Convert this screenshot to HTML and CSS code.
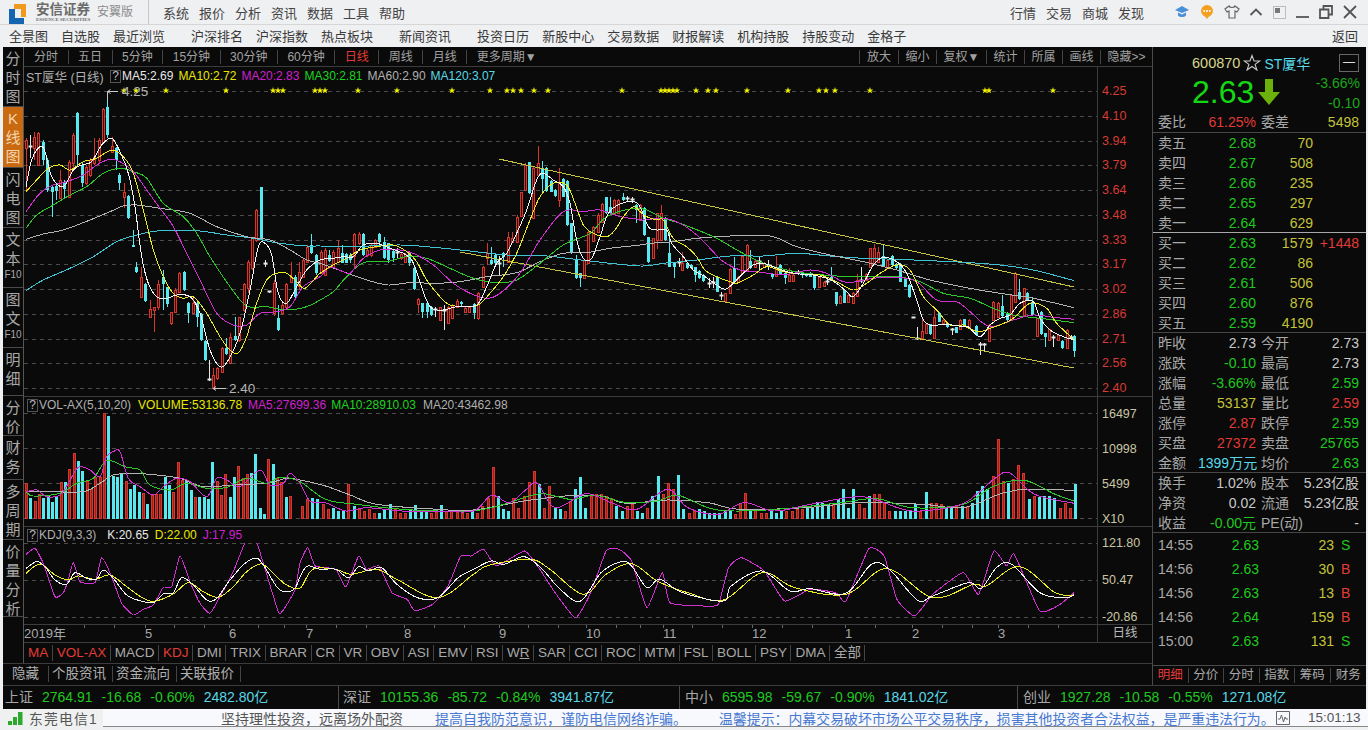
FILE: index.html
```html
<!DOCTYPE html>
<html lang="zh-CN">
<head>
<meta charset="utf-8">
<title>安信证券 安翼版</title>
<link rel="stylesheet" href="styles.css">
</head>
<body>
<div class="app">
  <header class="titlebar">
    <div class="brand">
      <svg class="logo" viewBox="0 0 28 26" width="28" height="26"><path class="logo-blue" d="M9 9h6v9h9v6H9z"/><path class="logo-orange" d="M14 4h12v13h-5V9h-7z"/></svg>
      <div class="brand-name"><b>安信证券</b><i>ESSENCE SECURITIES</i></div>
      <span class="brand-sub">安翼版</span>
    </div>
    <nav class="menu"><span>系统</span><span>报价</span><span>分析</span><span>资讯</span><span>数据</span><span>工具</span><span>帮助</span></nav>
    <nav class="menu menu-right"><span>行情</span><span>交易</span><span>商城</span><span>发现</span></nav>
    <div class="winicons">
      <svg width="16" height="14" viewBox="0 0 16 14"><path class="i-blue" d="M8 1 15 5 8 8 1 5z"/><path class="i-blue" d="M4 7.500v3c2 2 6 2 8 0v-3L8 9.500z"/></svg>
      <svg width="16" height="18" viewBox="0 0 16 18"><path class="i-orange" d="M8 2a6 6 0 0 1 6 6c0 3-2.500 5-4.500 6L8 16l-1.500-2C4.500 13 2 11 2 8a6 6 0 0 1 6-6z"/><circle class="i-dot" cx="5.200" cy="8" r="1"/><circle class="i-dot" cx="8" cy="8" r="1"/><circle class="i-dot" cx="10.800" cy="8" r="1"/></svg>
      <svg width="16" height="14" viewBox="0 0 16 14"><path class="i-line" d="M5 1 1 4l2 3 2-1v7h6V6l2 1 2-3-4-3c-.5 2-5.500 2-6 0z"/></svg>
      <svg width="14" height="10" viewBox="0 0 14 10"><path class="i-line i-thick" d="M1.500 8 7 2.500 12.500 8"/></svg>
      <svg width="13" height="13" viewBox="0 0 13 13"><path class="i-dotted" d="M.5.5h12v12H.5z"/><path class="i-fill" d="M2 2h5v5H2z"/></svg>
      <svg width="13" height="13" viewBox="0 0 13 13"><path class="i-line i-thick" d="M0 11h13"/></svg>
      <svg width="14" height="14" viewBox="0 0 14 14"><path class="i-line i-thick" d="M1 4.500h8.500V13H1zM4.500 4.500V1H13v8.500H9.500"/></svg>
      <svg width="14" height="14" viewBox="0 0 14 14"><path class="i-line i-thick" d="m1 1 12 12M13 1 1 13"/></svg>
    </div>
  </header>

  <nav class="navbar">
    <span>全景图</span><span>自选股</span><span class="group-end">最近浏览</span>
    <span>沪深排名</span><span>沪深指数</span><span class="group-end">热点板块</span>
    <span class="group-end">新闻资讯</span>
    <span>投资日历</span><span>新股中心</span><span>交易数据</span><span>财报解读</span><span>机构持股</span><span>持股变动</span><span>金格子</span>
    <span class="nav-back">返回</span>
  </nav>

  <main class="body">
    <section class="left">
      <div class="upper">
        <aside class="rail">
          <div>分时图</div>
          <div class="rail-on">K线图</div>
          <div>闪电图</div>
          <div>文本<small>F10</small></div>
          <div>图文<small>F10</small></div>
          <div>明细</div>
          <div>分价</div>
          <div>财务</div>
          <div>多周期</div>
          <div>价量分析</div>
        </aside>
        <div class="center">
          <div class="tabstrip">
            <span>分时</span><span>五日</span><span>5分钟</span><span>15分钟</span><span>30分钟</span><span>60分钟</span><span class="red">日线</span><span>周线</span><span>月线</span><span>更多周期▼</span>
            <span class="tab-right">放大</span><span>缩小</span><span>复权▼</span><span>统计</span><span>所属</span><span>画线</span><span class="tab-last">隐藏&gt;&gt;</span>
          </div>

          <div class="panel panel-price">
            <div class="plot">
              <div class="legend">
                <span class="gray stockname">ST厦华 (日线)</span><span class="qmark">?</span>
                <span class="white">MA5:2.69</span><span class="yellow">MA10:2.72</span><span class="magenta">MA20:2.83</span><span class="lime">MA30:2.81</span><span class="gray">MA60:2.90</span><span class="cyan">MA120:3.07</span>
              </div>
              <svg id="priceChart" class="chart" viewBox="24 85 1073 311" width="1073" height="311"></svg>
            </div>
            <div class="axis axis-price">
              <span>4.25</span><span>4.10</span><span>3.94</span><span>3.79</span><span>3.64</span><span>3.48</span><span>3.33</span><span>3.17</span><span>3.02</span><span>2.86</span><span>2.71</span><span>2.56</span><span>2.40</span>
            </div>
          </div>

          <div class="panel panel-vol">
            <div class="plot">
              <div class="legend legend-sub">
                <span class="qmark">?</span><span class="gray subname">VOL-AX(5,10,20)</span><span class="yellow vol-a">VOLUME:53136.78</span><span class="magenta vol-b">MA5:27699.36</span><span class="lime vol-c">MA10:28910.03</span><span class="gray">MA20:43462.98</span>
              </div>
              <svg id="volChart" class="chart" viewBox="24 413 1073 114" width="1073" height="114"></svg>
            </div>
            <div class="axis axis-vol"><span>16497</span><span>10998</span><span>5499</span><span>X10</span></div>
          </div>

          <div class="panel panel-kdj">
            <div class="plot">
              <div class="legend legend-sub">
                <span class="qmark">?</span><span class="gray subname">KDJ(9,3,3)</span><span class="white kdj-a">K:20.65</span><span class="yellow">D:22.00</span><span class="magenta">J:17.95</span>
              </div>
              <svg id="kdjChart" class="chart" viewBox="24 543 1073 82" width="1073" height="82"></svg>
            </div>
            <div class="axis axis-kdj"><span>121.80</span><span>50.47</span><span>-20.86</span></div>
          </div>

          <div class="panel panel-date">
            <svg id="dateAxis" class="chart" viewBox="24 625 1073 17" width="1073" height="17"></svg>
            <div class="axis axis-date">日线</div>
          </div>

          <div class="indicators">
            <span class="red">MA</span><span class="red">VOL-AX</span><span>MACD</span><span class="red">KDJ</span><span>DMI</span><span>TRIX</span><span>BRAR</span><span>CR</span><span>VR</span><span>OBV</span><span>ASI</span><span>EMV</span><span>RSI</span><span>W<u>R</u></span><span>SAR</span><span>CCI</span><span>ROC</span><span>MTM</span><span>FSL</span><span>BOLL</span><span>PSY</span><span>DMA</span><span>全部</span>
          </div>
        </div>
      </div>
      <div class="hiderow"><span class="hide-first">隐藏</span><span>个股资讯</span><span>资金流向</span><span>关联报价</span></div>
    </section>

    <aside class="quote">
      <div class="qhead">
        <div class="qtitle">
          <span class="qcode">600870</span>
          <svg width="18" height="17" viewBox="0 0 18 17"><path class="star-outline" d="M9 1.500 11 7h5.800l-4.700 3.400 1.800 5.600L9 12.500 4.100 16l1.800-5.600L1.200 7H7z"/></svg>
          <span class="cyan qname">ST厦华</span>
          <span class="qbox">—</span>
        </div>
        <div class="qprice">
          <span class="bigprice">2.63</span>
          <svg width="22" height="26" viewBox="0 0 22 26"><path class="arrow" d="M7 0h8v13h7L11 26 0 13h7z"/></svg>
          <div class="qchange"><span>-3.66%</span><span>-0.10</span></div>
        </div>
      </div>
      <div class="qrow-stat qline ratio"><span class="lab">委比</span><span class="red num">61.25%</span><span class="lab">委差</span><span class="olive num">5498</span></div>
      <div class="book qline-bright">
        <div class="bookrow"><span class="lab">卖五</span><span class="green num">2.68</span><span class="olive num">70</span></div>
        <div class="bookrow"><span class="lab">卖四</span><span class="green num">2.67</span><span class="olive num">508</span></div>
        <div class="bookrow"><span class="lab">卖三</span><span class="green num">2.66</span><span class="olive num">235</span></div>
        <div class="bookrow"><span class="lab">卖二</span><span class="green num">2.65</span><span class="olive num">297</span></div>
        <div class="bookrow"><span class="lab">卖一</span><span class="green num">2.64</span><span class="olive num">629</span></div>
      </div>
      <div class="book qline">
        <div class="bookrow"><span class="lab">买一</span><span class="green num">2.63</span><span class="olive num">1579</span><span class="red num">+1448</span></div>
        <div class="bookrow"><span class="lab">买二</span><span class="green num">2.62</span><span class="olive num">86</span></div>
        <div class="bookrow"><span class="lab">买三</span><span class="green num">2.61</span><span class="olive num">506</span></div>
        <div class="bookrow"><span class="lab">买四</span><span class="green num">2.60</span><span class="olive num">876</span></div>
        <div class="bookrow"><span class="lab">买五</span><span class="green num">2.59</span><span class="olive num">4190</span></div>
      </div>
      <div class="stats qline">
        <div class="qrow-stat"><span class="lab">昨收</span><span class="light num">2.73</span><span class="lab">今开</span><span class="light num">2.73</span></div>
        <div class="qrow-stat"><span class="lab">涨跌</span><span class="green num">-0.10</span><span class="lab">最高</span><span class="light num">2.73</span></div>
        <div class="qrow-stat"><span class="lab">涨幅</span><span class="green num">-3.66%</span><span class="lab">最低</span><span class="green num">2.59</span></div>
        <div class="qrow-stat"><span class="lab">总量</span><span class="olive num">53137</span><span class="lab">量比</span><span class="red num">2.59</span></div>
        <div class="qrow-stat"><span class="lab">涨停</span><span class="red num">2.87</span><span class="lab">跌停</span><span class="green num">2.59</span></div>
        <div class="qrow-stat"><span class="lab">买盘</span><span class="red num">27372</span><span class="lab">卖盘</span><span class="green num">25765</span></div>
        <div class="qrow-stat"><span class="lab">金额</span><span class="cyan num">1399万元</span><span class="lab">均价</span><span class="green num">2.63</span></div>
      </div>
      <div class="stats qline">
        <div class="qrow-stat"><span class="lab">换手</span><span class="light num">1.02%</span><span class="lab">股本</span><span class="light num">5.23亿股</span></div>
        <div class="qrow-stat"><span class="lab">净资</span><span class="light num">0.02</span><span class="lab">流通</span><span class="light num">5.23亿股</span></div>
        <div class="qrow-stat"><span class="lab">收益</span><span class="green num">-0.00元</span><span class="lab">PE(动)</span><span class="light num">-</span></div>
      </div>
      <div class="ticks">
        <div class="tick"><span class="lab">14:55</span><span class="green num">2.63</span><span class="olive num">23</span><span class="green">S</span></div>
        <div class="tick"><span class="lab">14:56</span><span class="green num">2.63</span><span class="olive num">30</span><span class="red">B</span></div>
        <div class="tick"><span class="lab">14:56</span><span class="green num">2.63</span><span class="olive num">13</span><span class="red">B</span></div>
        <div class="tick"><span class="lab">14:56</span><span class="green num">2.64</span><span class="olive num">159</span><span class="red">B</span></div>
        <div class="tick"><span class="lab">15:00</span><span class="green num">2.63</span><span class="olive num">131</span><span class="green">S</span></div>
      </div>
      <div class="qtabs"><span class="red">明细</span><span>分价</span><span>分时</span><span>指数</span><span>筹码</span><span>财务</span></div>
    </aside>
  </main>

  <div class="indexbar">
    <div class="idx idx-1"><span class="lab">上证</span><span class="green">2764.91</span><span class="green">-16.68</span><span class="green">-0.60%</span><span class="cyan">2482.80亿</span></div>
    <div class="idx idx-2"><span class="lab">深证</span><span class="green">10155.36</span><span class="green">-85.72</span><span class="green">-0.84%</span><span class="cyan">3941.87亿</span></div>
    <div class="idx idx-3"><span class="lab">中小</span><span class="green">6595.98</span><span class="green">-59.67</span><span class="green">-0.90%</span><span class="cyan">1841.02亿</span></div>
    <div class="idx idx-4"><span class="lab">创业</span><span class="green">1927.28</span><span class="green">-10.58</span><span class="green">-0.55%</span><span class="cyan">1271.08亿</span></div>
  </div>

  <footer class="status">
    <div class="net">
      <svg width="15" height="14" viewBox="0 0 15 14"><path class="signal" d="M0 10h4v4H0zM5 6h4v8H5zM10 1h4.500v13H10z"/></svg>
      <span>东莞电信1</span>
    </div>
    <div class="ticker">
      <span class="t-gray">坚持理性投资，远离场外配资</span>
      <span class="t-blue t-2">提高自我防范意识，谨防电信网络诈骗。</span>
      <span class="t-blue t-3">温馨提示：内幕交易破坏市场公平交易秩序，损害其他投资者合法权益，是严重违法行为。</span>
    </div>
    <svg class="pulse" width="14" height="14" viewBox="0 0 14 14"><path class="i-pulse" d="M.5.5h13v13H.5z"/><path class="i-pulse" d="M2 8h2l1.500-4 2 7 1.500-5 1 2h2"/></svg>
    <span class="clock">15:01:13</span>
  </footer>
</div>
<script src="chart.js"></script>
</body>
</html>
```

FILE: styles.css
```css
* { box-sizing: border-box; }
html, body { margin: 0; padding: 0; }
body {
  background: #eff0f2;
  font-family: "Liberation Sans", "Noto Sans CJK SC", sans-serif;
  overflow: hidden;
}
.app { width: 1368px; height: 730px; display: flex; flex-direction: column; }

/* title bar */
.titlebar { height: 25px; display: flex; align-items: center; color: #444; font-size: 13px; border-bottom: 1px solid #d6d6d6; }
.brand { display: flex; align-items: flex-start; width: 149px; height: 24px; border-right: 1px solid #c8c8c8; }
.logo { flex: none; }
.logo-blue { fill: #1565b0; }
.logo-orange { fill: #ef9a1c; }
.brand-name { display: flex; flex-direction: column; width: 56px; margin-left: 8px; color: #6c6c6c; padding-top: 3px; }
.brand-name b { font-size: 13.500px; line-height: 14px; white-space: nowrap; }
.brand-name i { font-size: 5px; line-height: 6px; font-style: normal; font-family: "Liberation Serif", serif; white-space: nowrap; font-weight: bold; }
.brand-sub { font-size: 12px; color: #8a8a8a; margin-left: 5px; line-height: 24px; }
.menu { display: flex; gap: 10px; margin-left: 14px; }
.menu-right { margin-left: auto; }
.winicons { display: flex; align-items: center; gap: 9px; margin-left: 30px; margin-right: 9px; width: 185px; }
.winicons svg:nth-child(n+5) { margin-left: 1px; }
.i-blue { fill: #4a90d9; }
.i-orange { fill: #f4a020; }
.i-dot { fill: #fff; }
.i-line { fill: none; stroke: #666; stroke-width: 1.200; }
.i-thick { stroke-width: 1.800; stroke: #555; }
.i-dotted { fill: none; stroke: #888; stroke-dasharray: 1 1; }
.i-fill { fill: #777; }

/* nav bar */
.navbar { height: 21px; display: flex; align-items: center; gap: 13px; padding-left: 9px; padding-right: 10px; font-size: 13px; color: #3a3a3a; }
.group-end { margin-right: 13px; }
.nav-back { margin-left: auto; }

/* main */
.body { height: 638px; margin: 1px 2px 0 3px; display: flex; background: #0a0a0a; }
.left { width: 1149px; display: flex; flex-direction: column; flex: none; }
.upper { display: flex; height: 617px; border-bottom: 1px solid #3c3c3c; }
.rail { width: 21px; flex: none; display: grid; grid-template-rows: 60px 61px 60px 60px 60px 48px 40px 44px 60px 77px 1fr; border-right: 1px solid #555; }
.rail div { font-size: 15px; line-height: 19px; color: #a8a8a8; border-bottom: 1px solid #4a4a4a; text-align: center; width: 20px; padding: 2px 2px 0; overflow: hidden; word-break: break-all; }
.rail small { display: block; font-size: 10px; line-height: 13px; margin: 0 -2px; font-family: "Liberation Sans", sans-serif; }
.rail .rail-on { background: #c96a10; color: #f3d6b0; }
.center { width: 1128px; display: flex; flex-direction: column; flex: none; }

.tabstrip { height: 20px; flex: none; display: flex; align-items: center; font-size: 12px; color: #a2a2a2; border-bottom: 1px solid #3c3c3c; white-space: nowrap; }
.tabstrip span { padding: 0 9.500px; border-right: 1px solid #444; line-height: 14px; }
.tabstrip span:first-child { padding-left: 10px; }
.tabstrip span:nth-child(10) { border-right: 0; }
.tabstrip .tab-right { margin-left: auto; border-left: 1px solid #444; padding: 0 7px 0 7px; }
.tabstrip span:nth-child(n+12) { padding: 0 6.500px; }
.tabstrip .tab-last { border-right: 0; padding: 0 0 0 5px; }

.panel { display: flex; border-bottom: 1px solid #3c3c3c; flex: none; }
.panel-price { height: 330px; }
.panel-vol { height: 130px; }
.panel-kdj { height: 98px; }
.panel-date { height: 18px; }
.plot { width: 1073px; flex: none; }
.chart { display: block; }
.axis { width: 55px; border-left: 1px solid #3c3c3c; flex: none; font-size: 12.500px; }
.axis span { display: block; padding-left: 4px; }
.axis-price { padding-top: 12px; color: #d83a34; font-size: 12.500px; }
.axis-price span { height: 24.750px; line-height: 24.750px; }
.axis-vol { color: #c9c5a5; }
.axis-vol span { height: 35px; line-height: 35px; }
.axis-kdj { color: #c9c5a5; padding-top: 0; }
.axis-kdj span { height: 37px; line-height: 37px; margin-top: 0; }
.axis-kdj span:first-child { margin-top: -2px; }
.axis-date { color: #b8b8b8; text-align: center; font-size: 12.500px; line-height: 17px; }

.legend { height: 18px; display: flex; align-items: center; gap: 5px; font-size: 12px; padding-left: 2px; white-space: nowrap; }
.legend-sub { height: 16px; gap: 6px; padding-left: 3px; }
.stockname { width: 79px; font-size: 12.500px; }
.qmark { width: 11px; height: 13px; border: 1px solid #555; color: #bbb; text-align: center; line-height: 11px; font-size: 12px; flex: none; margin-right: -4px; }
.legend-sub .qmark { margin-right: -5px; margin-left: 0; }
.legend-sub .subname { margin-right: 1px; }
.vol-b { margin-right: -1px; }
.vol-c { margin-right: 1px; }
.kdj-a { margin-left: 4px; margin-right: 0; }

.gray { color: #b0b0b0; }
.white { color: #e8e8e8; }
.yellow { color: #e8e800; }
.magenta { color: #d020d0; }
.lime { color: #1ed41e; }
.cyan { color: #58d8e6; }
.red { color: #e23b36; }
.tabstrip .red, .indicators .red, .qtabs .red { color: #e23b36; }
.green { color: #1fc81f; }
.olive { color: #c4c43a; }
.light { color: #c8c8c8; }
.lab { color: #a8a8a8; }

.indicators { height: 21px; display: flex; align-items: center; font-size: 13.500px; color: #a8a8a8; white-space: nowrap; }
.indicators span { padding: 0 3.500px 0 4px; border-right: 1px solid #444; line-height: 16px; }
.hiderow { height: 20px; display: flex; align-items: center; font-size: 13.500px; color: #b0b0b0; padding-left: 9px; }
.hiderow span { height: 16px; line-height: 16px; border-right: 1px solid #444; width: 64px; padding: 0 3px; white-space: nowrap; }
.hiderow .hide-first { width: 37px; padding-left: 0; }

/* quote column */
.quote { width: 214px; flex: none; border-left: 1px solid #4a4a4a; display: flex; flex-direction: column; font-size: 14px; }
.qhead { height: 61px; padding: 6px 6px 0 39px; flex: none; }
.qtitle { display: flex; align-items: center; height: 19px; gap: 3px; }
.qcode { color: #d7d78a; font-size: 14.500px; }
.qname { margin-left: 0; font-size: 14px; }
.qbox { margin-left: auto; width: 20px; height: 18px; border: 1px solid #666; color: #ddd; text-align: center; line-height: 15px; font-size: 12px; margin-right: 1px; }
.qprice { display: flex; align-items: center; height: 32px; margin-top: 4px; }
.bigprice { color: #14d814; font-size: 32px; line-height: 32px; width: 66px; }
.arrow { fill: #6cb00c; }
.qchange { margin-left: auto; display: flex; flex-direction: column; align-items: flex-end; color: #1aa81a; font-size: 14px; line-height: 20px; margin-top: 2px; }
.qline { border-bottom: 1px solid #474747; }
.qline-bright { border-bottom: 1px solid #a8a8a8; }
.qrow-stat { display: grid; grid-template-columns: 40px 58px 45px 58px; padding-left: 5px; height: 20px; line-height: 20px; white-space: nowrap; }
.qrow-stat.ratio { height: 25px; flex: none; padding-top: 4px; }
.qrow-stat .lab:nth-child(3) { padding-left: 5px; }
.num { text-align: right; }
.book { height: 100px; flex: none; }
.bookrow { display: grid; grid-template-columns: 40px 58px 57px 46px; padding-left: 5px; height: 20px; line-height: 20px; }
.stats { flex: none; }
.stats .qrow-stat:last-child { height: 19px; }
.ticks { flex: none; padding-top: 0; height: 131px; }
.tick { display: grid; grid-template-columns: 50px 51px 75px 25px; padding-left: 5px; height: 24px; line-height: 24px; }
.tick span:last-child { padding-left: 7px; }
.qtabs { margin-top: auto; height: 20px; display: grid; grid-template-columns: repeat(6, 35.500px); align-items: center; font-size: 12.500px; color: #a8a8a8; border-top: 1px solid #4a4a4a; text-align: center; padding-left: 0; }
.qtabs span { border-right: 1px solid #444; line-height: 15px; }
.qtabs span:last-child { border-right: 0; }

/* index bar */
.indexbar { height: 24px; margin: 0 2px 0 3px; display: flex; background: #0a0a0a; font-size: 14px; line-height: 23px; border-top: 1px solid #3c3c3c; white-space: nowrap; }
.idx { display: flex; gap: 9px; padding-left: 4px; border-right: 1px solid #4a4a4a; }
.idx-1 { width: 336px; padding-left: 2px; }
.idx-2 { width: 341px; }
.idx-3 { width: 338px; padding-left: 5px; }
.idx-4 { flex: 1; border-right: 0; padding-left: 5px; }

/* status bar */
.status { height: 18px; display: flex; align-items: center; background: #f7f9fd; border-bottom: 1px solid #888; flex: none; font-size: 14px; color: #555; }
.net { width: 103px; height: 18px; background: #eff0f0; display: flex; align-items: center; gap: 6px; padding-left: 8px; font-size: 13.800px; }
.signal { fill: #2ea82e; }
.net span { letter-spacing: 1.200px; color: #555; white-space: nowrap; }
.ticker { width: 1173px; display: flex; align-items: center; padding-left: 118px; white-space: nowrap; }
.t-gray { color: #555; }
.t-blue { color: #4878d0; }
.t-2 { margin-left: 32px; }
.t-3 { margin-left: 32px; font-size: 13.900px; }
.pulse { flex: none; }
.i-pulse { fill: none; stroke: #666; }
.clock { margin-left: 18px; font-size: 13.500px; color: #555; }

/* chart strokes */
.grid { stroke: #4c4c4c; stroke-dasharray: 4 4; fill: none; }
.wick-r { stroke: #d8362c; }
.wick-c { stroke: #58e8f0; }
.wick-w { stroke: #e8e8e8; }
.body-r { stroke: #d8362c; fill: #3a0e0a; }
.body-c { fill: #58e8f0; }
.vol-r { stroke: #d8362c; fill: #a02018; }
.line { fill: none; stroke-width: 1; shape-rendering: crispEdges; }
.l-ma5 { stroke: #f4f4f4; }
.l-ma10 { stroke: #ecec20; }
.l-ma20 { stroke: #d030d0; }
.l-ma30 { stroke: #2cc82c; }
.l-ma60 { stroke: #b4b4b4; }
.l-ma120 { stroke: #40c4d4; }
.trend { stroke: #c4c440; fill: none; shape-rendering: crispEdges; }
.starmark { fill: #f2f200; }
.anno { fill: #b4b4b4; font-size: 13.500px; font-family: "Liberation Sans", sans-serif; }
.anno-line { stroke: #c8c8c8; fill: none; }
.date-label { fill: #a8a8a8; font-size: 13px; font-family: "Liberation Sans", "Noto Sans CJK SC", sans-serif; }
.date-tick { stroke: #666; }
.star-outline { fill: none; stroke: #c8c8c8; stroke-width: 1.100; }
```

FILE: chart.js
```js
var NS = "http://www.w3.org/2000/svg";
function el(parent, tag, attrs, text) {
  var e = document.createElementNS(NS, tag);
  for (var k in attrs) e.setAttribute(k, attrs[k]);
  if (text) e.textContent = text;
  parent.appendChild(e);
  return e;
}
/* candle groups: origin (ox,oy), zoom 3x coordinates: "x c top,bottom,hi,lo" */
var candleGroups = [
 [20,80,"18r180,205,175,330 31w197,201,165,235 43r170,205,155,240 55r160,255,155,258 69c185,240,180,255 82c240,330,235,335 95c320,335,315,410 107c318,333,310,360 120r300,355,270,358 133c310,328,300,355 146r245,350,240,352 159r165,250,160,270 172c100,225,95,255 185c255,310,250,320 197r260,310,255,315 210r240,285,235,290 223r230,250,175,255 236r180,240,175,250 248r88,185,85,190 262c80,165,37,175 275r198,215,170,220 287c205,240,200,270 298c285,310,280,330 313r335,350,310,385 325c348,415,345,418 338c495,500,450,500 349c560,575,545,578 363r590,650,560,652 376c612,662,610,665 389r688,710,660,712 403r682,690,680,755 415r612,682,600,690 428c590,612,570,690 440c622,672,620,680 453r697,730,695,735 466r630,697,625,700 478r580,635,575,640 491c575,630,573,632 505c668,700,665,730 518r670,700,650,702 530c670,710,660,740 542c703,780,700,782 556c783,840,780,842 568w898,902,840,902 580r885,925,865,928 592r865,895,860,900 606r803,875,800,878 619c805,822,775,825 631r770,850,760,852 646c768,780,710,782 658r712,780,710,785 671r612,690,610,695 683r547,625,540,640 696r475,565,470,570 709r390,480,388,485 722c322,475,320,478 734w548,552,540,560 748w634,637,633,638 761r610,700,600,708 773c715,750,675,752 786r675,700,670,705 799r613,680,610,690 812r590,605,545,608 824c590,650,585,655 836r575,618,545,630 849r540,590,538,595 862r500,545,495,550 874c495,520,462,522 889c525,580,522,585"],
 [300,130,"60w400,402,395,405 62r365,430,360,432 75r360,435,355,438 88c375,392,360,395 100r365,410,360,415 113r355,395,330,400 125c370,398,345,400 138c372,398,370,400 151c375,390,370,400 163r312,378,310,415 176r312,340,305,345 188c312,375,310,378 201r360,375,355,380 214r345,375,340,380 226r330,350,328,355 238c313,335,310,338 253c335,385,320,388 265c340,390,338,398 278c362,385,360,395 291w367,372,355,385 303r372,385,368,390 316r372,395,368,400 328c370,400,365,408 342c415,478,412,480 355r508,523,505,550 367c520,545,518,565 380c520,545,518,565 393c530,555,528,558 406w536,540,530,560 419r532,570,530,572 431w540,544,525,600 444r530,578,528,580 457r525,565,523,568 470r512,530,508,535 482c515,523,512,530 495r535,545,530,548 508r530,545,528,548 521c523,550,520,568 535r490,565,485,570 548r412,470,408,472 560r370,385,338,405 572c390,403,352,405 586c375,400,370,408 598w398,402,378,435 610c370,380,365,410 623r320,395,305,398 637r325,335,305,338 650r260,335,255,338 662r187,258,185,260 675r105,180,100,182 688c97,190,95,192 700r115,265,110,268 713r100,135,48,138 725c118,148,92,185 739c115,182,112,185 752c152,185,150,187 765c180,198,178,200 778r155,210,115,230 790c148,200,145,202 802c152,285,150,288 814c280,370,278,372 828c388,445,375,447 841c430,445,428,470 853r390,445,388,448 865r305,400,300,402 880r290,332,288,335 893r255,305,250,308 905r222,275,220,278 917c202,250,200,252 930c230,250,200,252 942r210,252,208,255 955r210,250,208,252 968c200,210,188,212 981w203,206,198,212 995w208,212,200,220 1007c225,240,223,280 1020r225,270,222,272"],
 [630,170,"43c115,195,112,198 55c202,277,200,280 68r205,265,203,268 81r130,210,128,238 94r130,210,105,212 106c145,210,142,212 118c250,290,190,292 133c280,290,278,325 146w276,280,265,290 157r278,300,245,302 170c278,295,276,297 183c285,295,283,297 195c292,315,290,335 207c303,325,301,327 220c315,332,313,335 236w339,342,325,355 248w336,339,320,355 260c322,365,320,367 273w375,378,365,390 286r370,392,368,394 299r298,370,295,372 311c295,335,262,337 324r320,335,318,337 337r258,310,256,312 350r225,300,223,302 361c272,295,240,297 376r273,290,271,292 388w272,275,262,300 401r278,290,276,292 413w285,288,270,300 426c312,320,310,328 439r295,318,257,320 451c285,312,283,314 464c310,325,308,342 477r315,333,295,335 490r315,332,313,334 503w305,312,300,314 516c310,315,308,325 528c310,318,308,320 541c308,320,306,322 553c315,355,313,360 568r320,352,318,354 581r335,348,333,350 591w333,336,325,345 604c322,332,290,334 617c367,402,365,407 630r377,400,375,402 642c360,398,358,400 655r375,395,373,397 668r368,398,366,400 681r330,378,312,380 694w330,333,290,340 707r312,330,310,332 719r235,290,233,292 732r235,278,222,280 745r245,275,232,277 760c258,290,225,292 772r270,295,268,297 785c258,285,256,287 798c282,295,280,297 811c282,335,280,337 824c323,350,321,352 837c345,382,343,384 850w441,443,441,443 862w505,508,472,510 875r482,505,448,507 888r463,490,461,492 900c463,492,461,494 913r440,505,420,507 926c428,455,426,457 939r450,460,448,462 952c460,472,458,474 965w478,482,475,495 977c472,488,470,490 990r450,478,448,480 1003c448,470,446,472 1016r450,470,448,472"],
 [900,240,"228c258,285,256,287 240w312,316,305,345 253w312,316,310,335 268r255,302,253,304 280r185,240,183,242 295r188,230,186,232 307c198,228,165,230 320c218,240,216,242 332r165,240,163,242 346r98,185,96,187 358c155,178,118,180 371r145,225,143,227 382c158,180,156,182 397c188,225,172,227 410r235,288,233,290 422c215,282,213,284 436c280,290,278,320 448r268,300,266,302 460w292,296,285,320 473r285,300,283,302 486c302,325,300,327 500r270,325,268,327 512w290,294,285,298 523c287,332,285,350"]
];
function zoomPoints(ox, oy, sx, sy, flat) {
  var pts = [];
  for (var i = 0; i < flat.length; i += 2) pts.push([ox + flat[i] / sx, oy + flat[i + 1] / sy]);
  return pts;
}
function mergeSegments(segs) {
  var out = [];
  segs.forEach(function (s) {
    zoomPoints(s[0], s[1], s[3] || 3, 3, s[2]).forEach(function (p) {
      if (!out.length || p[0] > out[out.length - 1][0] + 1) out.push(p);
    });
  });
  return out;
}
function smooth(pts, tension) {
  var d = "M" + pts[0][0].toFixed(1) + " " + pts[0][1].toFixed(1);
  var t = tension === undefined ? 1 / 6 : tension;
  for (var i = 0; i < pts.length - 1; i++) {
    var p0 = pts[i - 1] || pts[i], p1 = pts[i], p2 = pts[i + 1], p3 = pts[i + 2] || p2;
    d += "C" + (p1[0] + (p2[0] - p0[0]) * t).toFixed(1) + " " + (p1[1] + (p2[1] - p0[1]) * t).toFixed(1) + " " +
      (p2[0] - (p3[0] - p1[0]) * t).toFixed(1) + " " + (p2[1] - (p3[1] - p1[1]) * t).toFixed(1) + " " +
      p2[0].toFixed(1) + " " + p2[1].toFixed(1);
  }
  return d;
}
function drawLine(svg, cls, pts, tension) {
  el(svg, "path", { "class": "line " + cls, d: smooth(pts, tension) });
}
function gridLines(svg, ys) {
  ys.forEach(function (y) {
    el(svg, "line", { "class": "grid", x1: 24, x2: 1097, y1: y + 0.5, y2: y + 0.5 });
  });
}

/* ---------- price panel ---------- */
var price = document.getElementById("priceChart");
var gy = [];
for (var g = 0; g < 13; g++) gy.push(Math.round(91 + g * 24.75));
gridLines(price, gy);

candleGroups.forEach(function (grp) {
  grp[2].split(" ").forEach(function (item) {
    var m = item.match(/^(\d+)([rcw])(.*)$/);
    var v = m[3].split(",").map(Number);
    var x = Math.round(grp[0] + (+m[1]) / 3);
    var top = Math.round(grp[1] + v[0] / 3), bot = Math.round(grp[1] + v[1] / 3);
    var hi = Math.round(grp[1] + v[2] / 3), lo = Math.round(grp[1] + v[3] / 3);
    var c = m[2];
    el(price, "line", { "class": "wick-" + c, x1: x + 0.5, x2: x + 0.5, y1: hi, y2: lo });
    if (c === "r") el(price, "rect", { "class": "body-r", x: x - 0.5, y: top + 0.5, width: 2, height: Math.max(bot - top, 1) });
    else if (c === "c") el(price, "rect", { "class": "body-c", x: x - 1, y: top, width: 3, height: Math.max(bot - top, 1) });
    else el(price, "rect", { "class": "wick-w", x: x - 1, y: top, width: 3, height: 1 });
  });
});

el(price, "line", { "class": "trend", x1: 499, y1: 159, x2: 1074, y2: 287 });
el(price, "line", { "class": "trend", x1: 460, y1: 252, x2: 1074, y2: 368 });

var maSets = {
  "l-ma120": [[20,80,[18,632,70,600,150,565,220,530,290,485,350,465,420,452,530,452,620,465,700,475,780,490,860,498,900,498]],[300,130,[0,350,150,350,300,345,400,352,500,362,620,375,740,378,860,392,1020,408]],[630,170,[0,285,100,280,200,270,300,258,400,258,500,250,600,258,700,265,800,268,900,272,1020,278]],[900,240,[0,55,150,65,300,75,400,90,523,122]]],
  "l-ma60": [[20,80,[18,478,70,462,130,450,210,420,270,395,310,378,350,375,420,385,510,400,590,440,680,470,750,480,810,510,860,540,900,550]],[300,130,[0,385,60,400,130,425,200,450,265,465,330,458,410,460,480,455,560,440,650,428,720,395,790,370,860,368,930,355,1020,345]],[630,170,[0,230,60,220,130,215,200,205,300,198,420,198,500,230,600,255,700,275,800,300,900,330,1020,355]],[900,240,[0,100,100,125,200,145,300,160,400,175,523,203]]],
  "l-ma30": [[20,80,[18,445,50,405,100,375,150,345,200,320,250,280,300,265,340,275,380,295,430,370,490,410,530,460,570,530,630,620,680,678,740,680,800,690,860,680,900,660]],[300,130,[0,528,50,510,100,485,140,440,190,398,260,395,320,380,380,385,450,415,520,445,590,458,650,450,720,400,790,345,870,310,920,260,1000,235]],[630,170,[0,115,50,120,100,145,150,160,250,200,330,245,400,280,470,300,530,310,620,318,700,320,800,320,870,335,940,370,1020,385]],[900,240,[0,110,70,140,140,165,210,180,280,205,340,225,420,235,523,248]]],
  "l-ma20": [[20,80,[18,395,60,340,100,315,140,305,190,285,230,255,270,238,300,245,340,275,380,330,420,385,460,440,500,520,540,600,590,700,640,735,680,735,720,700,770,695,810,680,850,620,900,590]],[300,130,[0,490,40,440,90,412,130,425,150,430,190,385,240,360,300,360,340,370,400,405,460,460,510,490,560,505,600,490,660,430,720,330,790,245,850,245,900,240,960,260,1020,268]],[630,170,[0,145,40,150,100,145,150,160,200,195,240,235,280,275,330,300,380,305,430,312,480,312,540,300,590,310,640,335,680,335,730,325,800,322,860,335,920,390,980,395,1020,425]],[900,240,[0,115,50,125,120,165,190,205,250,250,280,260,340,240,400,225,460,232,523,238]]],
  "l-ma10": [[20,80,[18,335,50,300,85,265,120,255,150,270,190,245,230,235,275,210,310,230,340,280,370,390,400,510,430,590,460,640,490,655,520,650,560,700,600,770,630,810,655,818,680,770,710,670,740,600,770,580,800,580,830,605,855,625,890,590,900,580]],[300,130,[0,470,30,445,60,420,100,405,140,385,180,360,230,350,280,345,320,365,350,395,380,450,420,500,450,525,500,530,535,525,570,490,610,440,650,370,690,270,720,200,760,160,800,165,825,220,850,285,880,310,920,320,945,300,970,260,1000,230]],[630,170,[0,110,30,125,50,140,80,150,100,150,130,205,170,230,200,260,225,300,260,320,300,335,320,340,370,315,410,290,460,305,510,312,570,315,620,335,670,360,710,340,750,310,800,285,840,300,880,380,920,420,960,465,1000,465]],[900,240,[205,265,240,275,270,265,300,255,340,235,390,190,440,205,470,250,523,300]]],
  "l-ma5": [[20,80,[18,320,35,240,60,200,75,215,95,290,130,320,160,270,185,255,215,245,245,195,275,175,300,215,325,280,345,380,365,530,385,610,410,650,440,655,470,645,510,650,540,700,570,810,600,860,625,840,660,760,690,630,715,500,735,490,755,525,775,640,800,670,830,620,860,570,900,540]],[300,130,[20,420,60,395,100,385,130,380,160,380,190,345,230,340,270,355,310,370,335,390,355,440,375,500,395,535,430,540,470,530,530,525,560,470,590,400,620,370,650,310,680,240,710,150,730,130,760,150,790,170,810,220,830,330,850,385,875,385,900,320,925,250,960,222,1000,215]],[630,170,[5,100,30,110,55,170,80,180,110,180,125,220,160,260,190,300,225,320,260,345,285,358,310,340,340,310,370,285,400,280,430,290,470,305,510,312,550,315,590,325,620,340,650,365,670,380,700,340,730,285,760,262,800,275,830,310,860,390,880,450,900,465,925,465,950,463,1000,470]],[900,240,[205,260,240,290,270,255,300,235,330,225,360,190,400,185,420,235,450,270,490,290,523,300]]]
};
Object.keys(maSets).forEach(function (k) { drawLine(price, k, mergeSegments(maSets[k])); });

[124,136,166,226,273,278,283,315,320,325,358,397,452,490,507,513,521,534,548,622,661,665,669,673,677,696,708,716,747,788,819,826,835,870,985,989,1053].forEach(function (x) {
  var d = "";
  for (var i = 0; i < 10; i++) {
    var r = i % 2 ? 1.400 : 3.500, a = Math.PI * i / 5 - Math.PI / 2;
    d += (i ? "L" : "M") + (x + r * Math.cos(a)).toFixed(1) + " " + (90.500 + r * Math.sin(a)).toFixed(1);
  }
  el(price, "path", { "class": "starmark", d: d + "z" });
});
el(price, "path", { "class": "anno-line", d: "M107.500 100V91.500H118M107.500 91.500l3-2M107.500 91.500l3 2" });
el(price, "text", { "class": "anno", x: 122, y: 96 }, "4.25");
el(price, "path", { "class": "anno-line", d: "M213 388.500H226M213 388.500l3-2M213 388.500l3 2" });
el(price, "text", { "class": "anno", x: 229, y: 393 }, "2.40");

/* ---------- volume panel ---------- */
var vol = document.getElementById("volChart");
gridLines(vol, [413, 448, 483, 518]);
function bar(svg, x, topY, c) {
  x = Math.round(x);
  topY = Math.round(topY);
  if (c === "r") el(svg, "rect", { "class": "vol-r", x: x - 0.5, y: topY + 0.5, width: 2, height: 518 - topY });
  else el(svg, "rect", { "class": "body-c", x: x - 1, y: topY, width: 3, height: 519 - topY });
}
var volA = "280r 325c 332r 312r 323c 318c 335c 322c 277r 277c 237r 190r 213c 243c 273r 298r 262r 262r 70r 78c 258c 260c 252c 273r 297c 285c 305c 308r 342c 315r 313r 312r 262c 285c 305r 216r 270r 272c 300c 320r 322c 322c 328c 216c 273r 315r 252r 320c 262c 228r 265r 253r 250c 192c 354c 372c 208r 222c 265r 275r 320c 318r".split(" ");
volA.forEach(function (s, i) { bar(vol, 26 + i * 4.33, 390 + parseInt(s, 10) / 3, s.slice(-1)); });
var volB = "330r 308r 305c 310c 325r 340r 335c 345c 345c 265r 330c 340r 345r 338r 350r 352c 340c 325c 340r 350r 350r 338c 328c 345c 345c 350r 348r 328c 345r 345r 348r 350r 350r 345c 350r 330r 305r 213r 300c 340c 345c 305r 335r 300r 258r 225r 265c 335r 270r 335c 340c 345r 315r 280c 243c 335c 300r 295r 295r 300r 305r 330c 345c 330r 325r 345c 350c 335r 300c 240c 295r 262r 280r 238c 340c 350r 345r 340c 345c 350c 350c 350c 345c 345c 355r 320r 292r 340c 340r 350r 350r 338c 352c 345c 345r 345r 340r 340r 335c 335c 318c 320c 325c 325r 310c 280c 335c 278c 325r 335r 300c 295r 295r 320r 345r 345c 345c 345c 345c 325c 345r 288c 320r 320r 325r 335c 330c 330r 330c 330r 320c 285c 270c 280c 240r 130r 255r 260c 250r 208r 230r 310c 300r 303c 300c 300c 305c 335r 320r 335r 263c".split(" ");
volB.forEach(function (s, i) { bar(vol, 302 + i * (1075 - 302) / (volB.length - 1), 396 + parseInt(s, 10) / 3, s.slice(-1)); });
var X2 = 1.96;
drawLine(vol, "l-ma60", mergeSegments([[0,390,[78,305,160,305,250,305,300,280,340,255,400,250,470,255,540,265,610,290,700,285,800,280,860,265,900,270]],[300,396,[0,255,50,270,100,298,150,325,270,340,340,342,440,315,520,300,590,300,640,322,720,312,800,320,860,340,990,335,1100,320,1220,325,1300,335,1370,295,1420,280,1517,283],X2]]));
drawLine(vol, "l-ma30", mergeSegments([[0,390,[78,305,100,318,180,310,230,280,280,265,320,212,380,232,420,240,450,285,510,300,560,280,620,295,680,292,740,265,800,280,840,262,900,275]],[300,396,[0,262,50,310,110,325,200,340,270,345,340,345,400,325,470,293,530,310,580,298,640,320,700,315,740,298,800,335,850,345,950,338,1060,320,1130,308,1200,335,1300,325,1360,270,1420,253,1480,295,1517,315],X2]]));
drawLine(vol, "l-ma20", mergeSegments([[0,390,[78,305,110,300,140,320,180,315,205,280,235,232,270,240,300,260,320,200,340,185,360,185,385,265,420,290,460,315,490,290,530,265,570,275,620,320,650,265,680,270,720,290,780,240,810,285,850,280,870,250,900,280]],[300,396,[0,280,20,315,50,320,90,345,130,335,200,345,270,345,340,345,375,298,410,320,440,285,465,262,500,335,560,293,610,320,660,340,720,280,760,335,820,355,870,320,930,345,1000,325,1090,302,1130,312,1200,345,1290,328,1330,290,1360,250,1390,230,1440,295,1517,322],X2]]));

/* ---------- KDJ panel ---------- */
var kdj = document.getElementById("kdjChart");
gridLines(kdj, [543, 580, 617]);
drawLine(kdj, "l-ma20", mergeSegments([[0,390,[78,493,105,475,130,520,165,620,190,608,205,570,220,517,240,575,285,578,305,503,335,560,365,640,400,675,430,658,460,645,490,592,515,590,540,498,570,575,600,640,630,670,660,620,700,545,735,460,770,460,790,520,835,665,850,660,885,600,900,520]],[300,396,[0,490,15,455,30,510,70,520,90,573,115,480,130,520,155,510,180,590,210,610,225,645,260,625,290,570,315,480,335,480,360,460,385,510,440,465,470,520,500,590,540,665,570,590,600,465,625,460,650,495,680,635,710,530,725,620,790,630,820,625,840,515,865,485,910,525,950,615,1000,580,1050,590,1070,615,1115,458,1145,480,1170,610,1205,660,1240,595,1300,530,1330,595,1360,465,1385,510,1400,475,1450,645,1490,625,1517,590],X2]]), 0.08);
drawLine(kdj, "l-ma10", mergeSegments([[0,390,[78,550,120,522,165,555,205,570,235,558,285,568,330,555,380,590,430,625,465,633,520,612,565,578,610,605,655,622,700,590,740,545,785,522,830,560,860,585,900,595]],[300,396,[0,560,25,520,70,520,100,535,150,520,190,550,270,605,340,535,370,508,450,490,490,520,555,595,600,535,650,503,700,555,760,590,830,612,905,530,970,575,1070,595,1150,518,1240,605,1320,565,1345,570,1410,512,1480,590,1517,597],X2]]));
drawLine(kdj, "l-ma5", mergeSegments([[0,390,[78,535,110,515,135,530,165,570,200,582,225,548,260,565,290,567,310,540,340,565,380,615,420,632,460,638,490,612,520,608,545,563,580,585,620,630,650,625,690,570,735,520,770,505,790,525,830,590,855,605,885,595,900,560]],[300,396,[0,530,15,510,40,520,70,520,95,545,115,512,135,525,160,515,190,565,230,605,270,605,310,545,340,520,375,495,400,505,440,482,475,520,510,580,550,615,590,530,630,497,650,510,680,575,705,550,750,590,830,615,845,570,905,525,960,585,1000,578,1070,592,1120,505,1155,520,1210,612,1240,600,1310,560,1335,578,1365,515,1395,505,1450,590,1500,605,1517,597],X2]]));

/* ---------- date axis ---------- */
var dateAxis = document.getElementById("dateAxis");
[[24,"2019年"],[145,"5"],[229,"6"],[306,"7"],[404,"8"],[499,"9"],[586,"10"],[663,"11"],[752,"12"],[845,"1"],[912,"2"],[998,"3"]].forEach(function (d) {
  el(dateAxis, "text", { "class": "date-label", x: d[0], y: 638 }, d[1]);
});
[84,114,145,174,204,229,258,284,306,336,366,404,434,464,499,528,558,586,616,640,663,692,722,752,782,812,845,875,912,942,972,998,1028,1058].forEach(function (x) {
  el(dateAxis, "line", { "class": "date-tick", x1: x + 0.5, x2: x + 0.5, y1: 625, y2: 628 });
});
```
